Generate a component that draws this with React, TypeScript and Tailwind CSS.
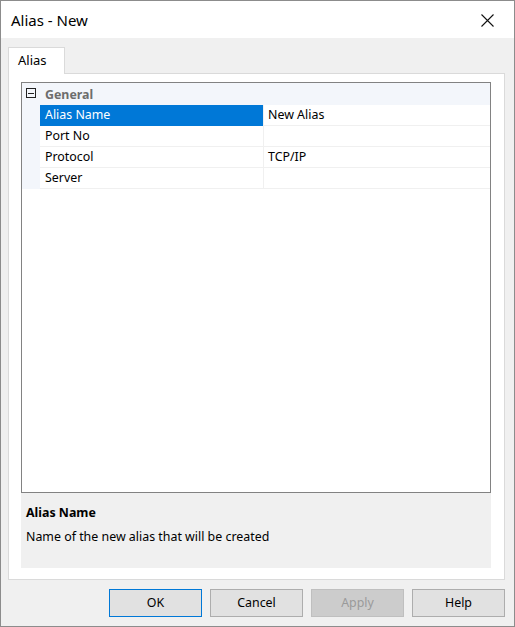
import React from 'react';

const rows = [
  { name: 'Alias Name', value: 'New Alias', selected: true },
  { name: 'Port No', value: '' },
  { name: 'Protocol', value: 'TCP/IP' },
  { name: 'Server', value: '' },
];

const buttons = [
  { label: 'OK', kind: 'default' },
  { label: 'Cancel', kind: 'normal' },
  { label: 'Apply', kind: 'disabled' },
  { label: 'Help', kind: 'normal' },
];

const App: React.FC = () => {
  return (
    <div
      className="w-[515px] h-[627px] bg-[#f0f0f0] border border-[#8c8c8c] flex flex-col text-[12.4px] text-black"
      style={{ fontFamily: '"Noto Sans", "Open Sans", sans-serif' }}
    >
      {/* title bar */}
      <div className="h-[37px] bg-white flex items-center justify-between pl-[10px] pr-[20px]">
        <span className="text-[15px] leading-none mt-[1px]">Alias - New</span>
        <svg width="13" height="13" viewBox="0 0 13 13" className="mt-[1px]">
          <path d="M0.5 0.5 L12.5 12.5 M12.5 0.5 L0.5 12.5" stroke="#111" strokeWidth="1.1" />
        </svg>
      </div>

      <div className="flex flex-col pl-[7px] pr-[9px] pt-[9px]">
        {/* tab strip */}
        <div className="flex">
          <div className="w-[57px] h-[27px] bg-white border border-b-0 border-[#dadada] flex items-center pl-[9px] text-[13px] -mb-px relative">
            Alias
          </div>
        </div>

        {/* tab page */}
        <div className="h-[507px] bg-white border border-[#dadada] flex flex-col pl-[12px] pt-[8px]">
          {/* property grid */}
          <div className="w-[470px] h-[411px] border border-[#828282] flex flex-col bg-white">
            <div className="h-[22px] bg-[#f3f6fb] flex items-center">
              <div className="w-[18px] flex justify-center">
                <div className="w-[10px] h-[10px] border border-[#222] flex items-center justify-center -mt-[2px]">
                  <div className="w-[6px] h-px bg-[#222]" />
                </div>
              </div>
              <span className="pl-[5px] font-bold text-[#6d6d6d] mt-[2px]">General</span>
            </div>
            {rows.map((r) => (
              <div key={r.name} className="h-[21px] flex">
                <div className="w-[18px] bg-[#f3f6fb]" />
                <div
                  className={
                    r.selected
                      ? 'w-[223px] bg-[#0078d7] text-white flex items-center pl-[5px]'
                      : 'w-[223px] border-b border-[#f0f0f0] flex items-center pl-[5px]'
                  }
                >
                  {r.name}
                </div>
                <div className="flex-1 border-l border-b border-[#f0f0f0] flex items-center pl-[4px]">
                  {r.value}
                </div>
              </div>
            ))}
          </div>

          {/* description */}
          <div className="w-[470px] h-[75px] bg-[#f0f0f0] flex flex-col px-[5px] pt-[11px]">
            <span className="font-bold leading-[18px]">Alias Name</span>
            <span className="leading-[18px] mt-[6px]">Name of the new alias that will be created</span>
          </div>
        </div>

        {/* buttons */}
        <div className="flex justify-end gap-[8px] mt-[9px]">
          {buttons.map((b) => (
            <div
              key={b.label}
              className={
                b.kind === 'default'
                  ? 'w-[93px] h-[28px] bg-[#e1e1e1] border border-[#0078d7] flex items-center justify-center'
                  : b.kind === 'disabled'
                  ? 'w-[93px] h-[28px] bg-[#cccccc] border border-[#bfbfbf] text-[#9a9a9a] flex items-center justify-center'
                  : 'w-[93px] h-[28px] bg-[#e1e1e1] border border-[#adadad] flex items-center justify-center'
              }
            >
              {b.label}
            </div>
          ))}
        </div>
      </div>
    </div>
  );
};

export default App;
